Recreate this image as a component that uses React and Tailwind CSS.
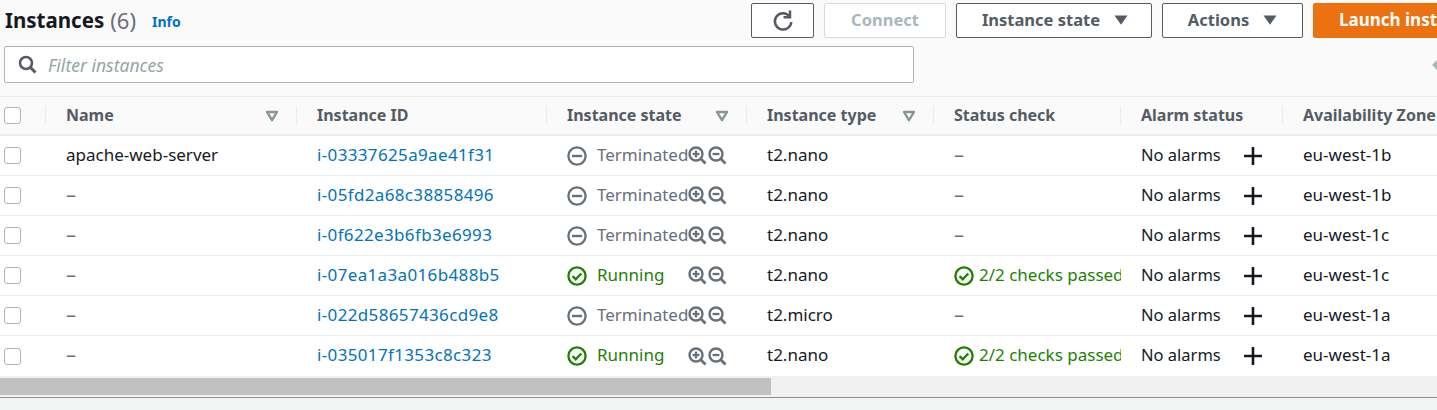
import React from "react";

const grid = "grid grid-cols-[46px_251px_250px_200px_187px_187px_162px_154px]";

function Sort() {
  return (
    <svg width="14" height="12" viewBox="0 0 14 12" className="shrink-0">
      <path d="M2 2h10L7 10.2z" fill="none" stroke="#879596" strokeWidth="2.4" strokeLinejoin="round" />
    </svg>
  );
}

function Caret() {
  return (
    <svg width="14" height="10" viewBox="0 0 14 10" className="shrink-0">
      <path d="M0.5 0.5h13L7 9.8z" fill="#545b64" />
    </svg>
  );
}

function Check() {
  return <span className="block w-[17px] h-[17px] rounded-[3px] border border-[#aab7b8] bg-white" />;
}

function Head({ label, sort, pr = "pr-[18px]" }) {
  return (
    <div className="flex items-center h-[37px]">
      <span className="w-px -ml-px h-[19px] bg-[#eaeded] shrink-0" />
      <div className={`flex flex-1 items-center justify-between min-w-0 pl-5 ${pr}`}>
        <span className="font-bold text-[#545b64] whitespace-nowrap pb-[2px]">{label}</span>
        {sort && <Sort />}
      </div>
    </div>
  );
}

function Minus() {
  return (
    <svg width="20" height="20" viewBox="0 0 20 20" className="shrink-0">
      <circle cx="10" cy="10" r="8.6" fill="none" stroke="#687078" strokeWidth="2.3" />
      <path d="M5 10h10" stroke="#687078" strokeWidth="2.4" />
    </svg>
  );
}

function Ok() {
  return (
    <svg width="20" height="20" viewBox="0 0 20 20" className="shrink-0">
      <circle cx="10" cy="10" r="8.6" fill="none" stroke="#1d8102" strokeWidth="2.3" />
      <path d="M5.6 10.2l3.1 3.1 5.6-5.8" fill="none" stroke="#1d8102" strokeWidth="2.4" />
    </svg>
  );
}

function Zoom({ plus }) {
  return (
    <svg width="19" height="19" viewBox="0 0 19 19" className="shrink-0">
      <circle cx="8" cy="8" r="6.5" fill="none" stroke="#687078" strokeWidth="2.4" />
      <path d="M12.8 12.8l4.7 4.7" stroke="#687078" strokeWidth="2.8" />
      <path d="M4.6 8h6.8" stroke="#687078" strokeWidth="2.3" />
      {plus && <path d="M8 4.6v6.8" stroke="#687078" strokeWidth="2.3" />}
    </svg>
  );
}

const rows = [
  ["apache-web-server", "i-03337625a9ae41f31", false, "t2.nano", "eu-west-1b"],
  ["–", "i-05fd2a68c38858496", false, "t2.nano", "eu-west-1b"],
  ["–", "i-0f622e3b6fb3e6993", false, "t2.nano", "eu-west-1c"],
  ["–", "i-07ea1a3a016b488b5", true, "t2.nano", "eu-west-1c"],
  ["–", "i-022d58657436cd9e8", false, "t2.micro", "eu-west-1a"],
  ["–", "i-035017f1353c8c323", true, "t2.nano", "eu-west-1a"],
];

function Row({ r, last }) {
  const [name, id, running, type, az] = r;
  return (
    <div className={`${grid} h-10 items-center bg-white text-[17px] ${last ? "" : "border-b border-[#eaeded]"}`}>
      <div className="pl-1"><Check /></div>
      <div className={`pl-5 pb-[2px] ${name === "–" ? "text-[#687078] text-[20px]" : "text-[#16191f]"}`}>{name}</div>
      <div className="pl-5 pb-[2px] text-[#0073bb] tracking-[0.35px] whitespace-nowrap">{id}</div>
      <div className="pl-5 flex items-center">
        {running ? <Ok /> : <Minus />}
        <span className={`ml-[10px] w-[91px] shrink-0 pb-[2px] ${running ? "text-[#1d8102]" : "text-[#687078]"}`}>
          {running ? "Running" : "Terminated"}
        </span>
        <Zoom plus />
        <span className="w-px" />
        <Zoom />
      </div>
      <div className="pl-5 pb-[2px] text-[#16191f]">{type}</div>
      <div className="pl-5 flex items-center overflow-hidden">
        {running ? (
          <>
            <Ok />
            <span className="ml-[5px] pb-[2px] text-[#1d8102] whitespace-nowrap">2/2 checks passed</span>
          </>
        ) : (
          <span className="pb-[2px] text-[20px] text-[#687078]">–</span>
        )}
      </div>
      <div className="pl-5 flex items-center text-[#16191f]">
        <span className="w-[103px] shrink-0 whitespace-nowrap pb-[2px] text-[16.5px]">No alarms</span>
        <svg width="18" height="18" viewBox="0 0 18 18" className="shrink-0">
          <path d="M9 0v18M0 9h18" stroke="#16191f" strokeWidth="2.6" />
        </svg>
      </div>
      <div className="pl-5 pb-[2px] text-[#16191f] whitespace-nowrap">{az}</div>
    </div>
  );
}

const btn = "h-[35px] shrink-0 rounded-[2px] border border-[#545b64] bg-white flex items-center justify-center pb-[2px] font-bold text-[16.5px] text-[#545b64]";

export default function App() {
  return (
    <div className="w-[1437px] h-[410px] overflow-hidden bg-[#fafafa] text-[16px] leading-5 font-['Noto_Sans',sans-serif]">
      <div className="flex items-start pt-[3px] h-[46px]">
        <div className="w-[751px] shrink-0 flex items-center h-[35px] pl-[5px] pb-[2px]">
          <span className="text-[20.5px] font-bold leading-6 text-[#16191f]">Instances</span>
          <span className="text-[22px] leading-6 text-[#687078] ml-[6px]">(6)</span>
          <span className="text-[14px] font-bold text-[#0073bb] ml-[16px] mt-[4px]">Info</span>
        </div>
        <div className="flex gap-[10px]">
          <button className={`${btn} w-[63px] !pb-0`}>
            <svg width="22" height="24" viewBox="0 0 22 24" fill="none">
              <path d="M17.5 7.2A8.2 8.2 0 1 0 19.3 13" stroke="#545b64" strokeWidth="2.5" />
              <path d="M18 1.5v6.8h-6.5" stroke="#545b64" strokeWidth="2.5" />
            </svg>
          </button>
          <button className={`${btn} w-[122px] !border-[#d5dbdb] !text-[#aab7b8]`}>Connect</button>
          <button className={`${btn} w-[196px] gap-[14px] pl-[2px]`}>Instance state <Caret /></button>
          <button className={`${btn} w-[141px] gap-[14px]`}>Actions <Caret /></button>
          <button className="h-[35px] w-[124px] shrink-0 rounded-l-[2px] bg-[#ec7211] font-bold text-[17px] pb-[2px] text-white text-left pl-[26px] whitespace-nowrap overflow-hidden">Launch instances</button>
        </div>
      </div>

      <div className="flex items-center h-[37px] ml-1 relative">
        <div className="w-[910px] h-[37px] rounded-[2px] border border-[#aab7b8] bg-white flex items-center pl-[13px]">
          <svg width="19" height="19" viewBox="0 0 19 19" fill="none" className="shrink-0">
            <circle cx="8" cy="8" r="6" stroke="#545b64" strokeWidth="2.5" />
            <path d="M12.5 12.5l5 5" stroke="#545b64" strokeWidth="3" />
          </svg>
          <span className="ml-[11px] italic text-[17.5px] text-[#95a5a6]">Filter instances</span>
        </div>
        <svg width="5" height="10" viewBox="0 0 5 10" className="absolute left-[1428px] top-[14px]">
          <path d="M5 0v10L0 5z" fill="#aab7b8" />
        </svg>
      </div>

      <div className="mt-[13px] border-t border-[#eaeded]">
        <div className={`${grid} h-[37px] items-center bg-[#fafafa] border-b-2 border-[#eaeded] box-content`}>
          <div className="pl-1"><Check /></div>
          <Head label="Name" sort />
          <Head label="Instance ID" />
          <Head label="Instance state" sort />
          <Head label="Instance type" sort />
          <Head label="Status check" />
          <Head label="Alarm status" />
          <Head label="Availability Zone" pr="pr-0" />
        </div>
        {rows.map((r, i) => (
          <Row key={r[1]} r={r} last={i === rows.length - 1} />
        ))}
      </div>

      <div className="h-[21px] bg-[#f1f1f1] pt-[2px]">
        <div className="w-[771px] h-[17px] bg-[#c1c1c1]" />
      </div>
      <div className="h-px bg-[#879596]" />
      <div className="h-[15px] bg-[#f2f3f3]" />
    </div>
  );
}
